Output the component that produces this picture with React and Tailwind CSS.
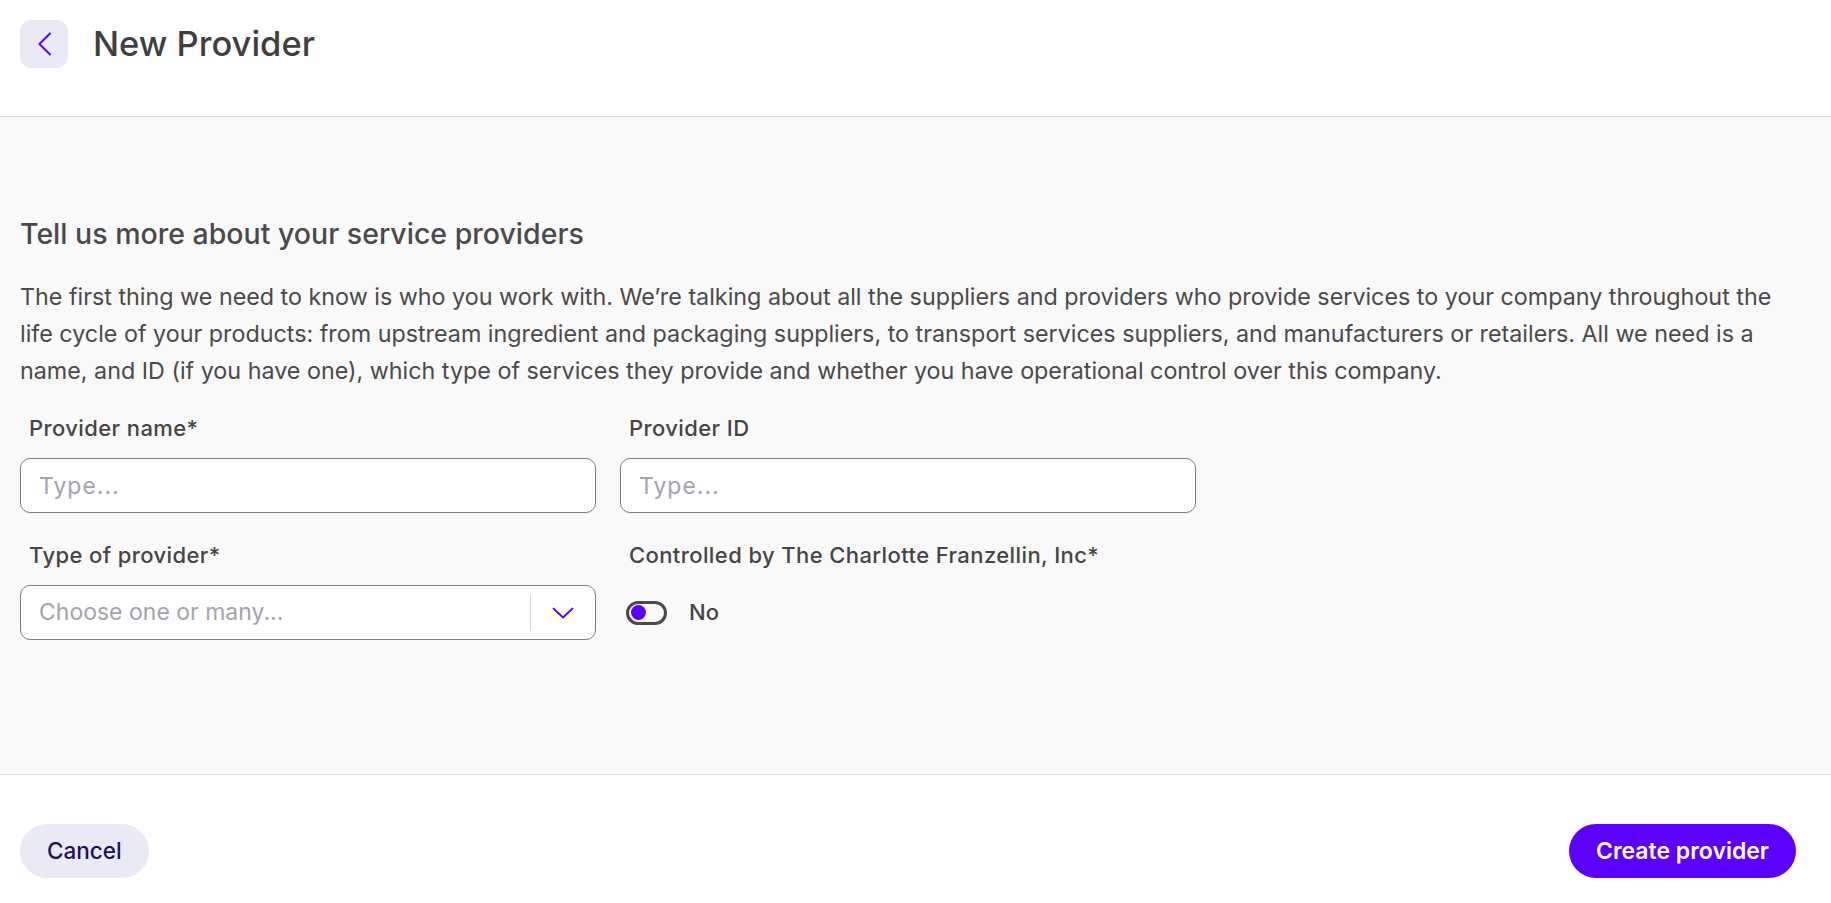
import React, { useState } from "react";

const FONT = { fontFamily: "Inter, 'Noto Sans', sans-serif" };

function ChevronDown() {
  return (
    <svg width="22" height="12" viewBox="0 0 22 12" fill="none">
      <path d="M1.5 1.5l9.5 9 9.5-9" stroke="#5b00ff" strokeWidth="1.8" strokeLinecap="round" strokeLinejoin="round" />
    </svg>
  );
}

function Field({ label, children }) {
  return (
    <div className="flex flex-col">
      <label className="px-[9px] text-[22px] leading-[28px] font-medium tracking-[0.4px] text-[#454545]">{label}</label>
      <div className="mt-4">{children}</div>
    </div>
  );
}

const INPUT =
  "w-full h-[55px] rounded-[10px] border border-[#7d7b86] bg-white px-[18px] text-[23px] tracking-[1px] text-[#404040] placeholder:text-[#a3a3ad] outline-none";

export default function App() {
  const [controlled, setControlled] = useState(false);

  return (
    <div className="h-[903px] flex flex-col bg-white overflow-hidden" style={FONT}>
      <header className="h-[117px] shrink-0 border-b border-[#d9d9dc] px-5 pt-5">
        <div className="flex items-center gap-[25px] h-12">
          <button className="w-12 h-12 rounded-xl bg-[#e9eaf6] flex items-center justify-center">
            <svg width="15" height="24" viewBox="0 0 15 24" fill="none">
              <path d="M13 1.5L2.5 12 13 22.5" stroke="#5b00ff" strokeWidth="2" strokeLinecap="round" strokeLinejoin="round" />
            </svg>
          </button>
          <h1 className="text-[34.5px] font-medium text-[#3f3f3f] leading-none">New Provider</h1>
        </div>
      </header>

      <main className="h-[658px] shrink-0 bg-[#f9f9f9] border-b border-[#d9d9dc] px-5 pt-[101px]">
        <h2 className="text-[28.5px] leading-8 font-medium text-[#4a4a4a]">Tell us more about your service providers</h2>
        <p className="mt-[28px] max-w-[1770px] text-[23.3px] leading-[37px] text-[#4a4a4a]">
          The first thing we need to know is who you work with. We’re talking about all the suppliers and providers who provide services to your company throughout the life cycle of your products: from upstream ingredient and packaging suppliers, to transport services suppliers, and manufacturers or retailers. All we need is a name, and ID (if you have one), which type of services they provide and whether you have operational control over this company.
        </p>

        <div className="mt-[25px] grid grid-cols-[576px_576px] gap-x-6 gap-y-[28px]">
          <Field label="Provider name*">
            <input placeholder="Type..." className={INPUT} />
          </Field>
          <Field label="Provider ID">
            <input placeholder="Type..." className={INPUT} />
          </Field>
          <Field label="Type of provider*">
            <div className="w-full h-[55px] rounded-[10px] border border-[#7d7b86] bg-white flex items-center">
              <span className="flex-1 pl-[18px] text-[23px] text-[#a3a3ad]">Choose one or many...</span>
              <span className="w-px h-[36px] bg-[#d4d4d8]"></span>
              <span className="w-[64px] flex items-center justify-center">
                <ChevronDown />
              </span>
            </div>
          </Field>
          <Field label="Controlled by The Charlotte Franzellin, Inc*">
            <div className="h-[55px] flex items-center gap-[22px] px-[6px]">
              <button
                onClick={() => setControlled(!controlled)}
                className="w-[41px] h-[24px] rounded-full border-[3px] border-[#4a4a4a] flex items-center px-[2px]"
              >
                <span className="w-[15px] h-[15px] rounded-full bg-[#5b00ff]"></span>
              </button>
              <span className="text-[22px] font-medium text-[#454545]">No</span>
            </div>
          </Field>
        </div>
      </main>

      <footer className="flex-1 flex items-start justify-between pl-5 pr-[35px] pt-[49px]">
        <button className="h-[54px] px-[27px] rounded-full bg-[#e9eaf6] text-[22.5px] font-medium text-[#1f0f5e]">Cancel</button>
        <button className="h-[54px] px-[27px] rounded-full bg-[#5b00ff] text-[23px] font-semibold text-white">Create provider</button>
      </footer>
    </div>
  );
}
